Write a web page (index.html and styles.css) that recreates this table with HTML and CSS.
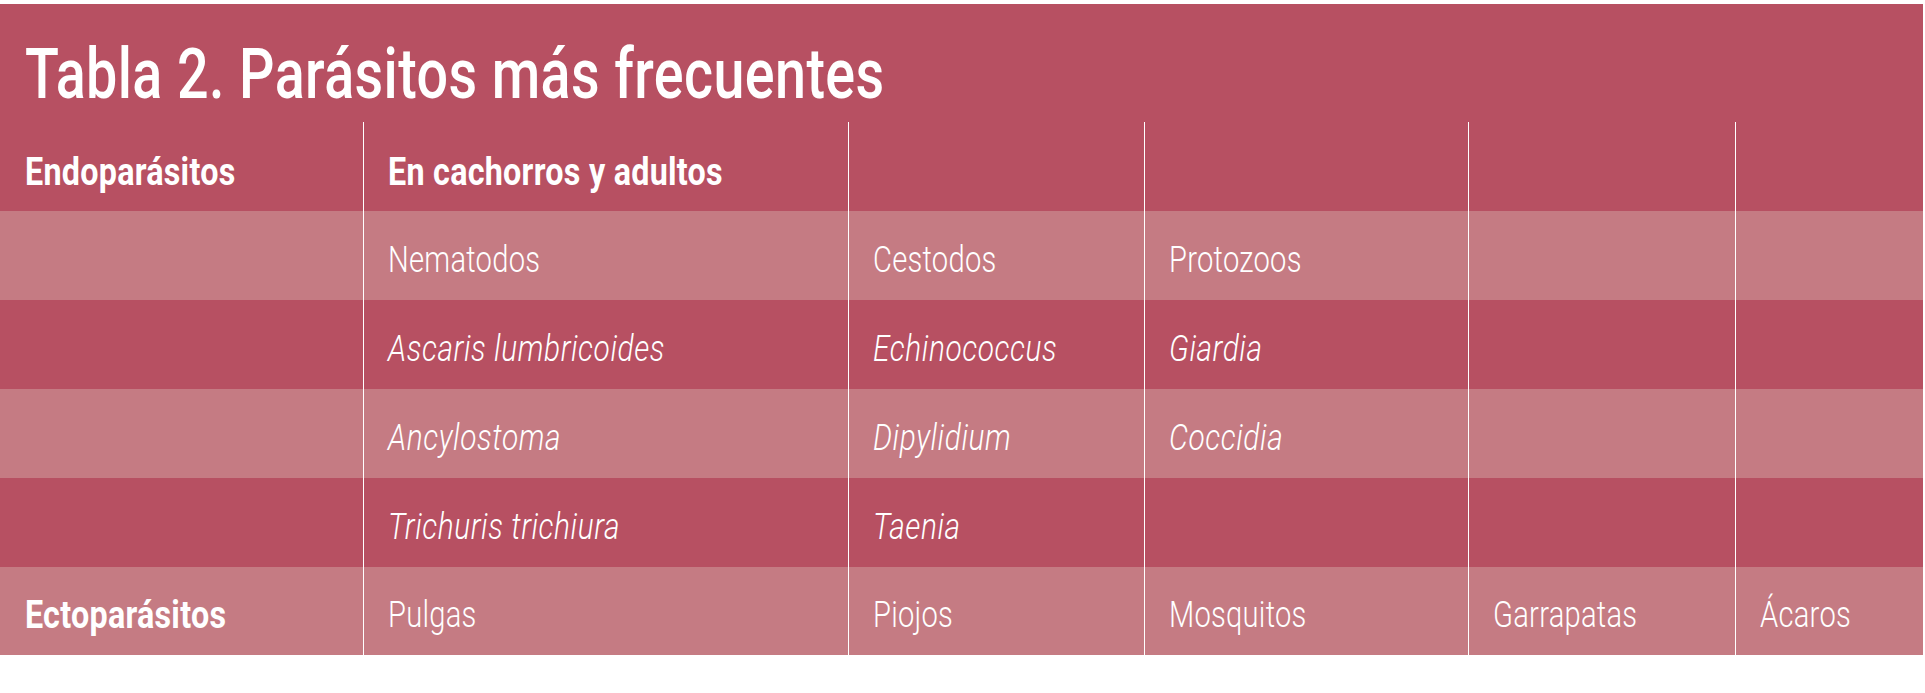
FILE: index.html
```html
<!DOCTYPE html>
<html lang="es">
<head>
<meta charset="utf-8">
<title>Tabla 2. Parásitos más frecuentes</title>
<link rel="stylesheet" href="styles.css">
</head>
<body>
<div class="card">
  <h1 class="title"><span class="t">Tabla 2. Parásitos más frecuentes</span></h1>
  <div class="row dark head">
    <div class="cell first strong"><span class="t">Endoparásitos</span></div>
    <div class="cell line strong"><span class="t">En cachorros y adultos</span></div>
    <div class="cell line"></div>
    <div class="cell line"></div>
    <div class="cell line"></div>
    <div class="cell line"></div>
  </div>
  <div class="row light">
    <div class="cell first"></div>
    <div class="cell line"><span class="t">Nematodos</span></div>
    <div class="cell line"><span class="t">Cestodos</span></div>
    <div class="cell line"><span class="t">Protozoos</span></div>
    <div class="cell line"></div>
    <div class="cell line"></div>
  </div>
  <div class="row dark">
    <div class="cell first"></div>
    <div class="cell line it"><span class="t">Ascaris lumbricoides</span></div>
    <div class="cell line it"><span class="t">Echinococcus</span></div>
    <div class="cell line it"><span class="t">Giardia</span></div>
    <div class="cell line"></div>
    <div class="cell line"></div>
  </div>
  <div class="row light">
    <div class="cell first"></div>
    <div class="cell line it"><span class="t">Ancylostoma</span></div>
    <div class="cell line it"><span class="t">Dipylidium</span></div>
    <div class="cell line it"><span class="t">Coccidia</span></div>
    <div class="cell line"></div>
    <div class="cell line"></div>
  </div>
  <div class="row dark">
    <div class="cell first"></div>
    <div class="cell line it"><span class="t">Trichuris trichiura</span></div>
    <div class="cell line it"><span class="t">Taenia</span></div>
    <div class="cell line"></div>
    <div class="cell line"></div>
    <div class="cell line"></div>
  </div>
  <div class="row light last">
    <div class="cell first strong"><span class="t">Ectoparásitos</span></div>
    <div class="cell line"><span class="t">Pulgas</span></div>
    <div class="cell line"><span class="t">Piojos</span></div>
    <div class="cell line"><span class="t">Mosquitos</span></div>
    <div class="cell line"><span class="t">Garrapatas</span></div>
    <div class="cell line"><span class="t">Ácaros</span></div>
  </div>
</div>
</body>
</html>
```

FILE: styles.css
```css
html, body {
  margin: 0;
  padding: 0;
  background: #ffffff;
}

body {
  padding-top: 4px;
  font-family: Roboto, "Liberation Sans", sans-serif;
  color: #ffffff;
}

.card {
  width: 1923px;
  background: #b75062;
}

.t {
  display: inline-block;
  transform: scaleX(0.81);
  transform-origin: 0 50%;
  white-space: nowrap;
}

.title {
  margin: 0;
  height: 118px;
  box-sizing: border-box;
  padding: 21px 0 0 25px;
  display: flex;
  align-items: center;
  font-size: 70px;
  font-weight: 500;
  letter-spacing: 0.5px;
  line-height: 1;
}

.title .t {
  transform: scaleX(0.795);
}

.row {
  display: grid;
  grid-template-columns: 363px 485px 296px 324px 267px 188px;
  height: 89px;
}

.row.last {
  height: 88px;
}

.dark {
  background: #b75062;
}

.light {
  background: #c57b83;
}

.cell {
  display: flex;
  align-items: center;
  box-sizing: border-box;
  padding: 8px 0 0 24px;
  font-size: 36px;
  font-weight: 300;
  line-height: 1;
  letter-spacing: 0.3px;
  white-space: nowrap;
  overflow: hidden;
}

.cell.first {
  padding-left: 25px;
}

.cell.line {
  border-left: 1px solid #ffffff;
}

.cell.strong {
  font-size: 38px;
  font-weight: 700;
}

.cell.strong .t {
  transform: scaleX(0.85);
}

.it .t {
  transform: scaleX(0.83);
  letter-spacing: 0.7px;
}

.head .cell {
  padding-top: 11px;
}

.it {
  font-style: italic;
}
```
